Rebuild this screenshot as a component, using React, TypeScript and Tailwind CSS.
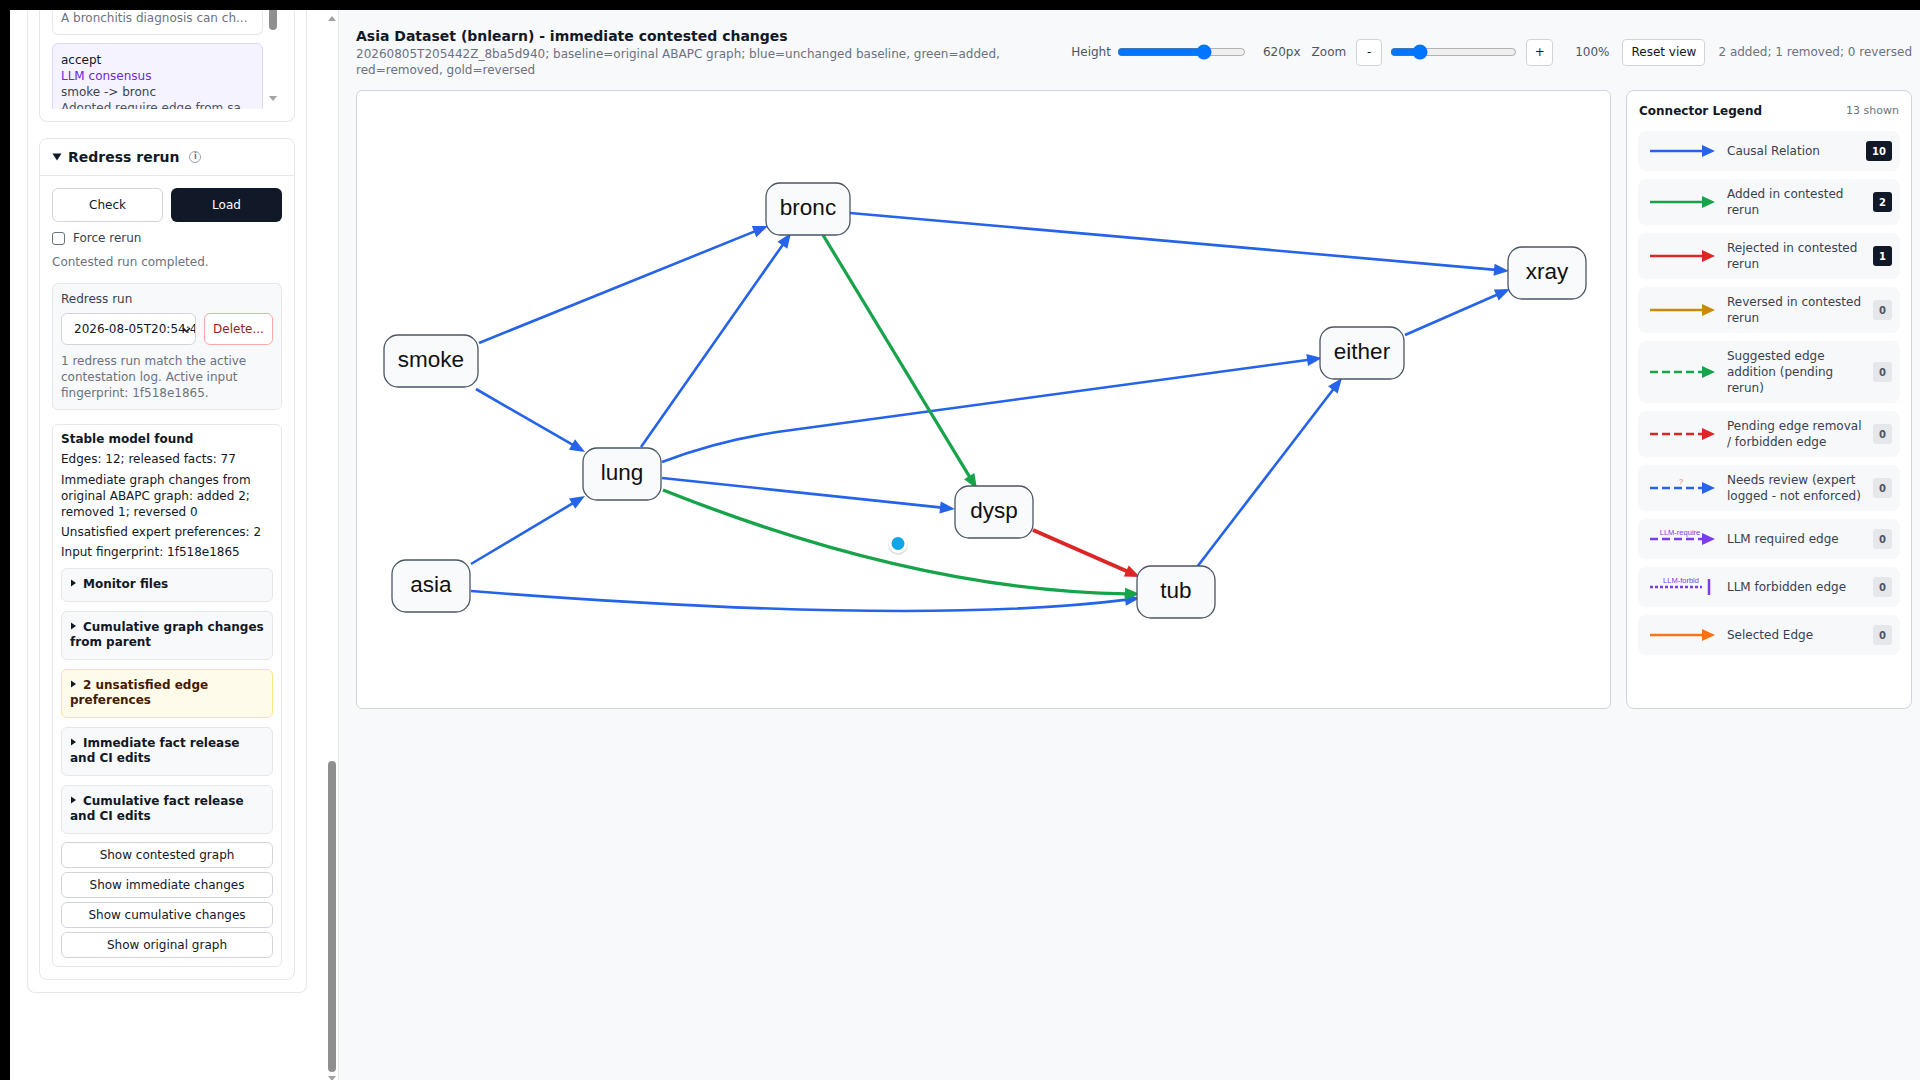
import React from "react";

const BLUE = "#2563eb";
const GREEN = "#16a34a";
const RED = "#dc2626";
const GOLD = "#ca8a04";
const PURPLE = "#7c3aed";
const ORANGE = "#f97316";

type Pt = [number, number];
type GEdge = { s: Pt; q?: Pt; j?: Pt; t: Pt; color: string; w: number };

// graph coordinates are relative to the canvas panel
const edges: GEdge[] = [
  { s: [122, 252], t: [411, 135], color: BLUE, w: 2.6 },
  { s: [284, 356], t: [434, 142], color: BLUE, w: 2.6 },
  { s: [119, 298], t: [228, 361], color: BLUE, w: 2.6 },
  { s: [114, 473], t: [228, 405], color: BLUE, w: 2.6 },
  { s: [305, 371], q: [360, 350], j: [420, 341], t: [965, 267], color: BLUE, w: 2.6 },
  { s: [305, 387], t: [598, 418], color: BLUE, w: 2.6 },
  { s: [114, 500], q: [560, 535], t: [783, 507], color: BLUE, w: 2.6 },
  { s: [493, 122], t: [1152, 180], color: BLUE, w: 2.6 },
  { s: [840, 476], t: [985, 287], color: BLUE, w: 2.6 },
  { s: [1048, 244], t: [1153, 198], color: BLUE, w: 2.6 },
  { s: [306, 399], q: [560, 500], t: [783, 503], color: GREEN, w: 3.4 },
  { s: [466, 144], t: [620, 398], color: GREEN, w: 3.2 },
  { s: [676, 439], t: [783, 486], color: RED, w: 4 },
];

const nodes = [
  { id: "bronc", x: 409, y: 92, w: 84 },
  { id: "smoke", x: 27, y: 244, w: 94 },
  { id: "lung", x: 226, y: 357, w: 78 },
  { id: "asia", x: 35, y: 469, w: 78 },
  { id: "xray", x: 1151, y: 156, w: 78 },
  { id: "either", x: 963, y: 236, w: 84 },
  { id: "dysp", x: 598, y: 395, w: 78 },
  { id: "tub", x: 780, y: 475, w: 78 },
];

function edgeParts(e: GEdge) {
  const prev = e.j ?? e.q ?? e.s;
  const dx = e.t[0] - prev[0];
  const dy = e.t[1] - prev[1];
  const len = Math.hypot(dx, dy);
  const ux = dx / len;
  const uy = dy / len;
  const L = 15;
  const H = 6;
  const bx = e.t[0] - ux * L;
  const by = e.t[1] - uy * L;
  const ex = bx + ux * 2;
  const ey = by + uy * 2;
  let d = `M${e.s[0]},${e.s[1]} `;
  if (e.q && e.j) d += `Q${e.q[0]},${e.q[1]} ${e.j[0]},${e.j[1]} L${ex},${ey}`;
  else if (e.q) d += `Q${e.q[0]},${e.q[1]} ${ex},${ey}`;
  else d += `L${ex},${ey}`;
  const head = `${e.t[0]},${e.t[1]} ${bx - uy * H},${by + ux * H} ${bx + uy * H},${by - ux * H}`;
  return { d, head };
}

const legend = [
  { label: "Causal Relation", count: 10, kind: "solid", color: BLUE },
  { label: "Added in contested rerun", count: 2, kind: "solid", color: GREEN },
  { label: "Rejected in contested rerun", count: 1, kind: "solid", color: RED },
  { label: "Reversed in contested rerun", count: 0, kind: "solid", color: GOLD },
  { label: "Suggested edge addition (pending rerun)", count: 0, kind: "dash", color: GREEN },
  { label: "Pending edge removal / forbidden edge", count: 0, kind: "dash", color: RED },
  { label: "Needs review (expert logged - not enforced)", count: 0, kind: "review", color: BLUE },
  { label: "LLM required edge", count: 0, kind: "llmreq", color: PURPLE },
  { label: "LLM forbidden edge", count: 0, kind: "llmforbid", color: PURPLE },
  { label: "Selected Edge", count: 0, kind: "solid", color: ORANGE },
];

function LegendGlyph({ kind, color }: { kind: string; color: string }) {
  const dash = kind === "solid" ? undefined : "8 4";
  return (
    <svg width="65" height="26" viewBox="0 0 65 26" className="shrink-0">
      {kind === "llmforbid" ? (
        <>
          <line x1="0" y1="13" x2="52" y2="13" stroke={color} strokeWidth="2.5" strokeDasharray="3 2" />
          <line x1="59" y1="5" x2="59" y2="21" stroke={color} strokeWidth="2.5" />
          <text x="31" y="9" fontSize="7.5" fill={color} textAnchor="middle" fontFamily="Liberation Sans, Arial, sans-serif">
            LLM-forbid
          </text>
        </>
      ) : (
        <>
          <line x1="0" y1="13" x2="53" y2="13" stroke={color} strokeWidth="2.5" strokeDasharray={dash} />
          <polygon points="52,7 65,13 52,19" fill={color} />
          {kind === "review" && (
            <text x="31" y="9" fontSize="7.5" fill={ORANGE} textAnchor="middle" fontFamily="Liberation Sans, Arial, sans-serif">
              ?
            </text>
          )}
          {kind === "llmreq" && (
            <text x="30" y="9" fontSize="7.5" fill={color} textAnchor="middle" fontFamily="Liberation Sans, Arial, sans-serif">
              LLM-require
            </text>
          )}
        </>
      )}
    </svg>
  );
}

function Caret() {
  return (
    <svg width="12" height="8" viewBox="0 0 12 8" className="mr-[1px] inline-block align-[1px]">
      <polygon points="1,0.5 6,4 1,7.5" fill="#111827" />
    </svg>
  );
}

function Summary({ children, warn }: { children: React.ReactNode; warn?: boolean }) {
  return (
    <div
      className={
        warn
          ? "rounded-md border border-[#fde68a] bg-[#fffbeb] py-2 pl-2 pr-1.5 text-[12px] font-bold leading-[15.5px] text-[#451a03]"
          : "rounded-md border border-[#e5e7eb] bg-[#f8f9fa] py-2 pl-2 pr-1.5 text-[12px] font-bold leading-[15.5px] text-[#111827]"
      }
    >
      <Caret />
      {children}
    </div>
  );
}

function ShowButton({ children }: { children: React.ReactNode }) {
  return (
    <button className="flex h-[26px] w-full items-center justify-center rounded-md border border-[#d1d5db] bg-white text-[12px] text-[#111827]">
      {children}
    </button>
  );
}

function Sidebar() {
  return (
    <aside className="flex h-full w-[329px] shrink-0 border-r border-[#e5e7eb] bg-white">
      <div className="min-w-0 flex-1 overflow-hidden pl-[17px] pr-[18px]">
        <div className="flex flex-col gap-4 rounded-b-lg border border-t-0 border-[#e5e7eb] bg-white px-[11px] pb-3">
          {/* evidence list, scrolled */}
          <div className="rounded-b-lg border border-t-0 border-[#e5e7eb] px-3 pb-3">
            <div className="flex h-[99px] gap-[3px] overflow-hidden">
              <div className="flex w-[211px] flex-col gap-2">
                <div className="rounded-b-md border border-t-0 border-[#e5e7eb] bg-white px-2 pb-2 text-[12px] leading-4 text-[#6b7280]">
                  A bronchitis diagnosis can ch...
                </div>
                <div className="rounded-md border border-[#ddd6fe] bg-[#f5f3ff] p-2 text-[12px] leading-4">
                  <div className="text-[#111827]">accept</div>
                  <div className="text-[#6d28d9]">LLM consensus</div>
                  <div className="text-[#374151]">smoke -&gt; bronc</div>
                  <div className="text-[#4b5563]">Adopted require edge from sa...</div>
                </div>
              </div>
              <div className="flex w-[14px] flex-col items-center">
                <div className="h-[20px] w-2 rounded-b-full bg-[#8f8f8f]" />
                <svg width="8" height="5" viewBox="0 0 8 5" className="mt-auto mb-[8px]">
                  <polygon points="0,0 8,0 4,5" fill="#a3a3a3" />
                </svg>
              </div>
            </div>
          </div>

          {/* Redress rerun */}
          <div className="rounded-lg border border-[#e5e7eb] bg-white">
            <div className="flex items-center border-b border-[#e5e7eb] px-3 py-2">
              <svg width="10" height="8" viewBox="0 0 10 8" className="mr-[6px]">
                <polygon points="0.5,0.5 9.5,0.5 5,7.5" fill="#111827" />
              </svg>
              <span className="text-[14px] font-bold leading-5 text-[#111827]">Redress rerun</span>
              <span className="ml-[10px] flex h-[12px] w-[12px] items-center justify-center rounded-full border border-[#9ca3af] text-[8px] font-bold leading-none text-[#6b7280]">
                i
              </span>
            </div>
            <div className="p-3 text-[12px] leading-4">
              <div className="grid grid-cols-2 gap-2">
                <button className="h-[34px] rounded-md border border-[#d1d5db] bg-white text-[#111827]">Check</button>
                <button className="h-[34px] rounded-md bg-[#111827] text-white">Load</button>
              </div>
              <div className="mt-2 flex items-center gap-2 text-[#374151]">
                <span className="h-[13px] w-[13px] rounded-[3px] border border-[#6b7280] bg-white" />
                Force rerun
              </div>
              <div className="mt-2 text-[#6b7280]">Contested run completed.</div>

              <div className="mt-[13px] rounded-md border border-[#e5e7eb] bg-[#f8f9fa] px-2 pt-[7px] pb-2">
                <div className="text-[#374151]">Redress run</div>
                <div className="mt-1.5 flex gap-2">
                  <div className="relative flex h-[32px] min-w-0 flex-1 items-center overflow-hidden rounded-md border border-[#d1d5db] bg-white pl-3 pr-1 text-[#111827]">
                    <span className="whitespace-nowrap">2026-08-05T20:54:42Z</span>
                    <svg width="9" height="6" viewBox="0 0 9 6" className="absolute right-[4px] top-[13px]">
                      <polyline points="1,1 4.5,4.5 8,1" fill="none" stroke="#111827" strokeWidth="1.6" />
                    </svg>
                  </div>
                  <button className="h-[32px] w-[69px] shrink-0 rounded-md border border-[#fca5a5] bg-white text-[#991b1b]">Delete...</button>
                </div>
                <div className="mt-2 text-[#6b7280]">
                  1 redress run match the active contestation log. Active input fingerprint: 1f518e1865.
                </div>
              </div>

              <div className="mt-3.5 rounded-md border border-[#e5e7eb] bg-white px-2 pt-1.5 pb-2 text-[#111827]">
                <div className="font-bold">Stable model found</div>
                <div className="mt-1 flex flex-col gap-1">
                  <div>Edges: 12; released facts: 77</div>
                  <div className="mt-[1px]">Immediate graph changes from original ABAPC graph: added 2; removed 1; reversed 0</div>
                  <div>Unsatisfied expert preferences: 2</div>
                  <div>Input fingerprint: 1f518e1865</div>
                </div>
                <div className="mt-2 flex flex-col gap-[9px]">
                  <Summary>Monitor files</Summary>
                  <Summary>Cumulative graph changes from parent</Summary>
                  <Summary warn>2 unsatisfied edge preferences</Summary>
                  <Summary>Immediate fact release and CI edits</Summary>
                  <Summary>Cumulative fact release and CI edits</Summary>
                </div>
                <div className="mt-2 flex flex-col gap-1">
                  <ShowButton>Show contested graph</ShowButton>
                  <ShowButton>Show immediate changes</ShowButton>
                  <ShowButton>Show cumulative changes</ShowButton>
                  <ShowButton>Show original graph</ShowButton>
                </div>
              </div>
            </div>
          </div>
        </div>
      </div>

      {/* sidebar scrollbar */}
      <div className="flex w-[13px] shrink-0 flex-col items-center pt-[6px]">
        <svg width="8" height="5" viewBox="0 0 8 5">
          <polygon points="0,5 8,5 4,0" fill="#a3a3a3" />
        </svg>
        <div className="mt-auto h-[311px] w-2 rounded-full bg-[#8f8f8f]" />
        <svg width="8" height="5" viewBox="0 0 8 5" className="mt-[4px] mb-[-1px]">
          <polygon points="0,0 8,0 4,5" fill="#a3a3a3" />
        </svg>
      </div>
    </aside>
  );
}

function Graph() {
  return (
    <div className="h-[619px] min-w-0 flex-1 overflow-hidden rounded-md border border-[#d1d5db] bg-white">
      <svg className="block h-full w-full" viewBox="0 0 1253 617">
        {edges.map((e, i) => {
          const p = edgeParts(e);
          return (
            <g key={i}>
              <path d={p.d} fill="none" stroke={e.color} strokeWidth={e.w} />
              <polygon points={p.head} fill={e.color} />
            </g>
          );
        })}
        {nodes.map((n) => (
          <g key={n.id}>
            <rect x={n.x} y={n.y} width={n.w} height={52} rx={14} fill="#f8fafc" stroke="#4b5563" strokeWidth="1.3" />
            <text
              x={n.x + n.w / 2}
              y={n.y + 24}
              textAnchor="middle"
              dominantBaseline="central"
              fontSize="22.5"
              fill="#111111"
              fontFamily="Liberation Sans, Arial, sans-serif"
            >
              {n.id}
            </text>
          </g>
        ))}
        <circle cx={541} cy={454} r={10} fill="#000" opacity="0.12" />
        <circle cx={541} cy={452.5} r={8} fill="#0ea5e9" stroke="#ffffff" strokeWidth="3" />
      </svg>
    </div>
  );
}

function Legend() {
  return (
    <div className="flex w-[286px] shrink-0 flex-col rounded-lg border border-[#d1d5db] bg-white px-[11px] pt-3">
      <div className="flex items-center justify-between pl-[1px] pr-[1px] leading-4">
        <span className="text-[12px] font-bold text-[#111827]">Connector Legend</span>
        <span className="text-[11px] text-[#6b7280]">13 shown</span>
      </div>
      <div className="mt-3 flex flex-col gap-2">
        {legend.map((r) => (
          <div key={r.label} className="flex min-h-[40px] items-center rounded-lg bg-[#f7f8fa] py-[7px] pl-3 pr-2">
            <LegendGlyph kind={r.kind} color={r.color} />
            <span className="ml-3 min-w-0 flex-1 text-[12px] leading-4 text-[#374151]">{r.label}</span>
            <span
              className={
                r.count > 0
                  ? "ml-1.5 flex h-[20px] items-center rounded-[3px] bg-[#111827] px-[6px] text-[10px] font-bold text-white"
                  : "ml-1.5 flex h-[20px] items-center rounded-[3px] bg-[#e5e7eb] px-[6px] text-[10px] font-bold text-[#4b5563]"
              }
            >
              {r.count}
            </span>
          </div>
        ))}
      </div>
    </div>
  );
}

export default function App() {
  return (
    <div className="flex h-screen w-screen overflow-hidden bg-black pl-[10px] pt-[10px] font-['DejaVu_Sans','Noto_Sans',sans-serif]">
      <div className="flex h-full w-full bg-[#f8f9fa]">
        <Sidebar />

        <main className="flex min-w-0 flex-1 flex-col pl-[17px] pr-[8px] pt-4">
          <div className="flex items-center">
            <div className="min-w-0 flex-1 pr-6">
              <div className="text-[14px] font-bold leading-5 text-[#111827]">
                Asia Dataset (bnlearn) - immediate contested changes
              </div>
              <div className="text-[12px] leading-4 text-[#6b7280]">
                20260805T205442Z_8ba5d940; baseline=original ABAPC graph; blue=unchanged baseline, green=added,
                red=removed, gold=reversed
              </div>
            </div>
            <div className="flex shrink-0 items-center whitespace-nowrap text-[12px] text-[#4b5563]">
              <span>Height</span>
              <input type="range" min={200} max={800} defaultValue={620} className="ml-[6px] w-[129px]" />
              <span className="ml-[17px]">620px</span>
              <span className="ml-[11px]">Zoom</span>
              <button className="ml-[10px] h-[27px] w-[26px] rounded border border-[#d1d5db] bg-white text-[#111827]">-</button>
              <input type="range" min={25} max={400} defaultValue={100} className="ml-[8px] w-[127px]" />
              <button className="ml-[9px] h-[27px] w-[27px] rounded border border-[#d1d5db] bg-white text-[#111827]">+</button>
              <span className="ml-[22px]">100%</span>
              <button className="ml-[13px] h-[27px] rounded border border-[#d1d5db] bg-white px-2 text-[#111827]">Reset view</button>
              <span className="ml-[13px] text-[#6b7280]">2 added; 1 removed; 0 reversed</span>
            </div>
          </div>

          <div className="mt-3 flex gap-[15px]">
            <Graph />
            <Legend />
          </div>
        </main>
      </div>
    </div>
  );
}
